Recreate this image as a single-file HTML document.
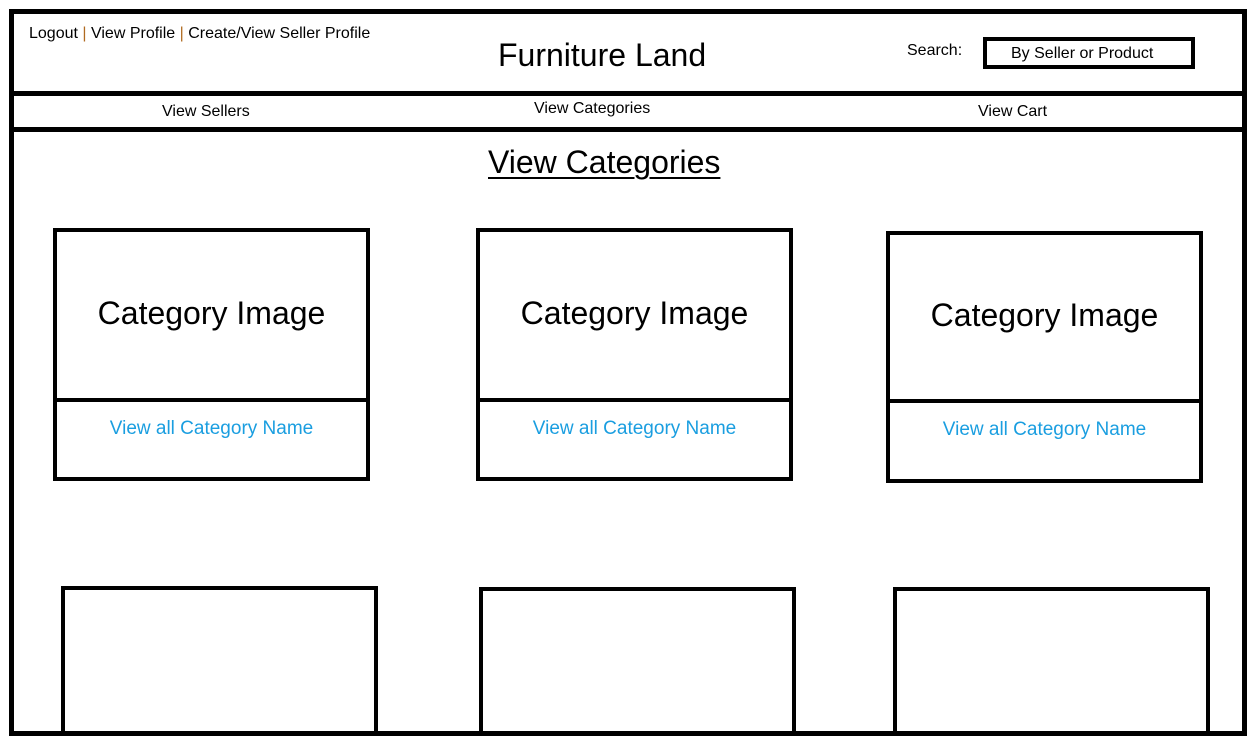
<!DOCTYPE html>
<html><head><meta charset="utf-8"><style>
html,body{margin:0;width:1255px;height:746px;overflow:hidden}
body{background:#fff;position:relative;font-family:"Liberation Sans","Noto Sans CJK TC",sans-serif;color:#000}
.a{position:absolute;box-sizing:border-box}
.b{border:4px solid #000}
.t{position:absolute;white-space:nowrap}
.p{color:#b06a20}
.ln{color:#1a9ee0;font-size:19px;text-align:center;width:100%;left:0}
.ci{font-size:32px;text-align:center;width:100%;left:0}
</style></head><body>
<div class="a b" style="left:61px;top:586px;width:317px;height:147px;border-bottom:none"></div>
<div class="a b" style="left:479px;top:587px;width:317px;height:146px;border-bottom:none"></div>
<div class="a b" style="left:893px;top:587px;width:317px;height:146px;border-bottom:none"></div>
<div class="a" style="left:9px;top:9px;width:1238px;height:727px;border:5px solid #000"></div>
<div class="a" style="left:9px;top:91px;width:1238px;height:5px;background:#000"></div>
<div class="a" style="left:9px;top:127px;width:1238px;height:5px;background:#000"></div>
<div class="t" style="left:29px;top:25px;font-size:16px">Logout <span class="p">|</span> View Profile <span class="p">|</span> Create/View Seller Profile</div>
<div class="t" style="left:498px;top:37px;font-size:32px">Furniture Land</div>
<div class="t" style="left:907px;top:42px;font-size:16px">Search:</div>
<div class="a" style="left:983px;top:37px;width:212px;height:32px;border:4px solid #000"></div>
<div class="t" style="left:1011px;top:45px;font-size:16px">By Seller or Product</div>
<div class="t" style="left:162px;top:103px;font-size:16px">View Sellers</div>
<div class="t" style="left:534px;top:100px;font-size:16px">View Categories</div>
<div class="t" style="left:978px;top:103px;font-size:16px">View Cart</div>
<div class="t" style="left:488px;top:144px;font-size:32px;text-decoration:underline;text-decoration-thickness:2px;text-underline-offset:4px">View Categories</div>

<div class="a b" style="left:53px;top:228px;width:317px;height:253px">
<div class="a" style="left:0;top:166px;width:100%;height:4px;background:#000"></div>
<div class="t ci" style="top:63px">Category Image</div>
<div class="t ln" style="top:186px">View all Category Name</div></div>
<div class="a b" style="left:476px;top:228px;width:317px;height:253px">
<div class="a" style="left:0;top:166px;width:100%;height:4px;background:#000"></div>
<div class="t ci" style="top:63px">Category Image</div>
<div class="t ln" style="top:186px">View all Category Name</div></div>
<div class="a b" style="left:886px;top:231px;width:317px;height:252px">
<div class="a" style="left:0;top:164px;width:100%;height:4px;background:#000"></div>
<div class="t ci" style="top:62px">Category Image</div>
<div class="t ln" style="top:184px">View all Category Name</div></div>
</body></html>
